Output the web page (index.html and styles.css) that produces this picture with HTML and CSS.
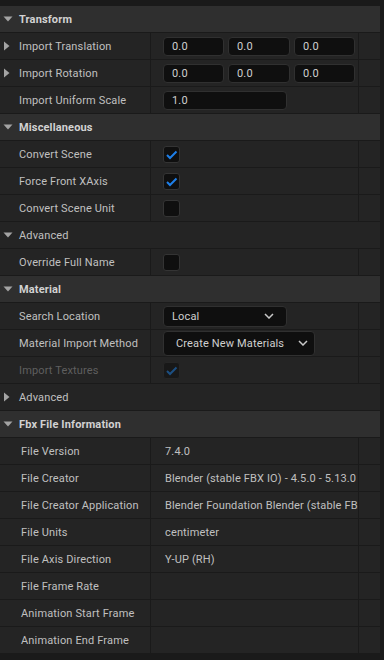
FILE: index.html
```html
<!DOCTYPE html>
<html lang="en">
  <head>
    <meta charset="UTF-8" />
    <title>Import Options</title>
    <link rel="stylesheet" href="styles.css">
  </head>
  <body>
    <div class="panel">
      <div class="category">
        <span class="expander"><svg width="10" height="6" viewBox="0 0 10 6"><polygon points="0.5,0.5 9.5,0.5 5,5.5" /></svg></span>
        Transform
      </div>
      <div class="row">
        <div class="name">
          <span class="expander"><svg width="7" height="10" viewBox="0 0 7 10"><polygon points="1,0.5 6.5,5 1,9.5" /></svg></span>
          Import Translation
        </div>
        <div class="value">
          <span class="field">0.0</span>
          <span class="field mid">0.0</span>
          <span class="field">0.0</span>
        </div>
        <div class="extra"></div>
      </div>
      <div class="row">
        <div class="name">
          <span class="expander"><svg width="7" height="10" viewBox="0 0 7 10"><polygon points="1,0.5 6.5,5 1,9.5" /></svg></span>
          Import Rotation
        </div>
        <div class="value">
          <span class="field">0.0</span>
          <span class="field mid">0.0</span>
          <span class="field">0.0</span>
        </div>
        <div class="extra"></div>
      </div>
      <div class="row">
        <div class="name"><span class="expander"></span>Import Uniform Scale</div>
        <div class="value"><span class="field wide">1.0</span></div>
        <div class="extra"></div>
      </div>

      <div class="category">
        <span class="expander"><svg width="10" height="6" viewBox="0 0 10 6"><polygon points="0.5,0.5 9.5,0.5 5,5.5" /></svg></span>
        Miscellaneous
      </div>
      <div class="row">
        <div class="name"><span class="expander"></span>Convert Scene</div>
        <div class="value">
          <span class="checkbox"><svg width="17" height="17" viewBox="0 0 17 17"><polyline points="4,9 7,12 13.5,5.5" /></svg></span>
        </div>
        <div class="extra"></div>
      </div>
      <div class="row">
        <div class="name"><span class="expander"></span>Force Front XAxis</div>
        <div class="value">
          <span class="checkbox"><svg width="17" height="17" viewBox="0 0 17 17"><polyline points="4,9 7,12 13.5,5.5" /></svg></span>
        </div>
        <div class="extra"></div>
      </div>
      <div class="row">
        <div class="name"><span class="expander"></span>Convert Scene Unit</div>
        <div class="value"><span class="checkbox"></span></div>
        <div class="extra"></div>
      </div>
      <div class="group">
        <span class="expander"><svg width="10" height="6" viewBox="0 0 10 6"><polygon points="0.5,0.5 9.5,0.5 5,5.5" /></svg></span>
        Advanced
      </div>
      <div class="row">
        <div class="name"><span class="expander"></span>Override Full Name</div>
        <div class="value"><span class="checkbox"></span></div>
        <div class="extra"></div>
      </div>

      <div class="category">
        <span class="expander"><svg width="10" height="6" viewBox="0 0 10 6"><polygon points="0.5,0.5 9.5,0.5 5,5.5" /></svg></span>
        Material
      </div>
      <div class="row">
        <div class="name"><span class="expander"></span>Search Location</div>
        <div class="value">
          <span class="combo">
            Local
            <svg width="10" height="6" viewBox="0 0 10 6"><polyline points="1,1 5,5 9,1" /></svg>
          </span>
        </div>
        <div class="extra"></div>
      </div>
      <div class="row">
        <div class="name"><span class="expander"></span>Material Import Method</div>
        <div class="value">
          <span class="combo tall">
            Create New Materials
            <svg width="10" height="6" viewBox="0 0 10 6"><polyline points="1,1 5,5 9,1" /></svg>
          </span>
        </div>
        <div class="extra"></div>
      </div>
      <div class="row disabled">
        <div class="name"><span class="expander"></span>Import Textures</div>
        <div class="value">
          <span class="checkbox"><svg width="17" height="17" viewBox="0 0 17 17"><polyline points="4,9 7,12 13.5,5.5" /></svg></span>
        </div>
        <div class="extra"></div>
      </div>
      <div class="group">
        <span class="expander"><svg width="7" height="10" viewBox="0 0 7 10"><polygon points="1,0.5 6.5,5 1,9.5" /></svg></span>
        Advanced
      </div>

      <div class="category">
        <span class="expander"><svg width="10" height="6" viewBox="0 0 10 6"><polygon points="0.5,0.5 9.5,0.5 5,5.5" /></svg></span>
        Fbx File Information
      </div>
      <div class="row info">
        <div class="name">File Version</div>
        <div class="value">7.4.0</div>
        <div class="extra"></div>
      </div>
      <div class="row info">
        <div class="name">File Creator</div>
        <div class="value">Blender (stable FBX IO) - 4.5.0 - 5.13.0</div>
        <div class="extra"></div>
      </div>
      <div class="row info">
        <div class="name">File Creator Application</div>
        <div class="value">Blender Foundation Blender (stable FBX IO)</div>
        <div class="extra"></div>
      </div>
      <div class="row info">
        <div class="name">File Units</div>
        <div class="value">centimeter</div>
        <div class="extra"></div>
      </div>
      <div class="row info">
        <div class="name">File Axis Direction</div>
        <div class="value">Y-UP (RH)</div>
        <div class="extra"></div>
      </div>
      <div class="row info">
        <div class="name">File Frame Rate</div>
        <div class="value"></div>
        <div class="extra"></div>
      </div>
      <div class="row info">
        <div class="name">Animation Start Frame</div>
        <div class="value"></div>
        <div class="extra"></div>
      </div>
      <div class="row info">
        <div class="name">Animation End Frame</div>
        <div class="value"></div>
        <div class="extra"></div>
      </div>
    </div>
  </body>
</html>
```

FILE: styles.css
```css
body {
  margin: 0;
  background: #1a1a1a;
  font-family: Roboto, "Noto Sans", sans-serif;
  font-size: 11px;
  letter-spacing: 0.15px;
  color: #c0c0c0;
  overflow: hidden;
}

.panel {
  width: 380px;
  padding-top: 5px;
}

.expander {
  width: 19px;
  flex: none;
  display: flex;
  align-items: center;
  padding-left: 3px;
  box-sizing: border-box;
}

.expander svg {
  fill: #a3a3a3;
}

.category {
  height: 26px;
  border-top: 1px solid #1a1a1a;
  background: #2f2f2f;
  display: flex;
  align-items: center;
  font-weight: 700;
  color: #d2d2d2;
}

.group {
  height: 26px;
  border-top: 1px solid #1a1a1a;
  background: #242424;
  display: flex;
  align-items: center;
}

.row {
  height: 26px;
  border-top: 1px solid #1a1a1a;
  background: #242424;
  display: flex;
}

.name {
  width: 151px;
  box-sizing: border-box;
  flex: none;
  border-right: 1px solid #1a1a1a;
  display: flex;
  align-items: center;
  white-space: nowrap;
}

.value {
  width: 208px;
  box-sizing: border-box;
  flex: none;
  padding-left: 12px;
  border-right: 1px solid #1a1a1a;
  display: flex;
  align-items: center;
  gap: 4px;
  overflow: hidden;
  white-space: nowrap;
}

.extra {
  flex: 1;
}

.field {
  width: 61px;
  height: 19px;
  box-sizing: border-box;
  background: #0f0f0f;
  border: 1px solid #303030;
  border-radius: 4px;
  padding-left: 8px;
  display: flex;
  align-items: center;
  color: #cfcfcf;
}

.field.mid {
  width: 62px;
}

.field.wide {
  width: 124px;
}

.checkbox {
  width: 17px;
  height: 17px;
  box-sizing: border-box;
  background: #0f0f0f;
  border: 1px solid #343434;
  border-radius: 3px;
  display: flex;
}

.checkbox svg {
  margin: -1px;
  fill: none;
  stroke: #1e7fe8;
  stroke-width: 2;
}

.combo {
  width: 124px;
  height: 21px;
  box-sizing: border-box;
  background: #0f0f0f;
  border: 1px solid #303030;
  border-radius: 4px;
  padding: 0 12px 0 8px;
  display: flex;
  align-items: center;
  justify-content: space-between;
  color: #cfcfcf;
}

.combo.tall {
  width: 152px;
  height: 25px;
  padding: 0 6px 0 12px;
}

.combo svg {
  fill: none;
  stroke: #c8c8c8;
  stroke-width: 1.5;
}

.disabled .name {
  color: #5f5f5f;
}

.disabled .checkbox {
  background: #181818;
  border-color: #262626;
}

.disabled .checkbox svg {
  stroke: #1c4f82;
}

.info .name {
  padding-left: 21px;
}

.info .value {
  padding-left: 14px;
}
```
